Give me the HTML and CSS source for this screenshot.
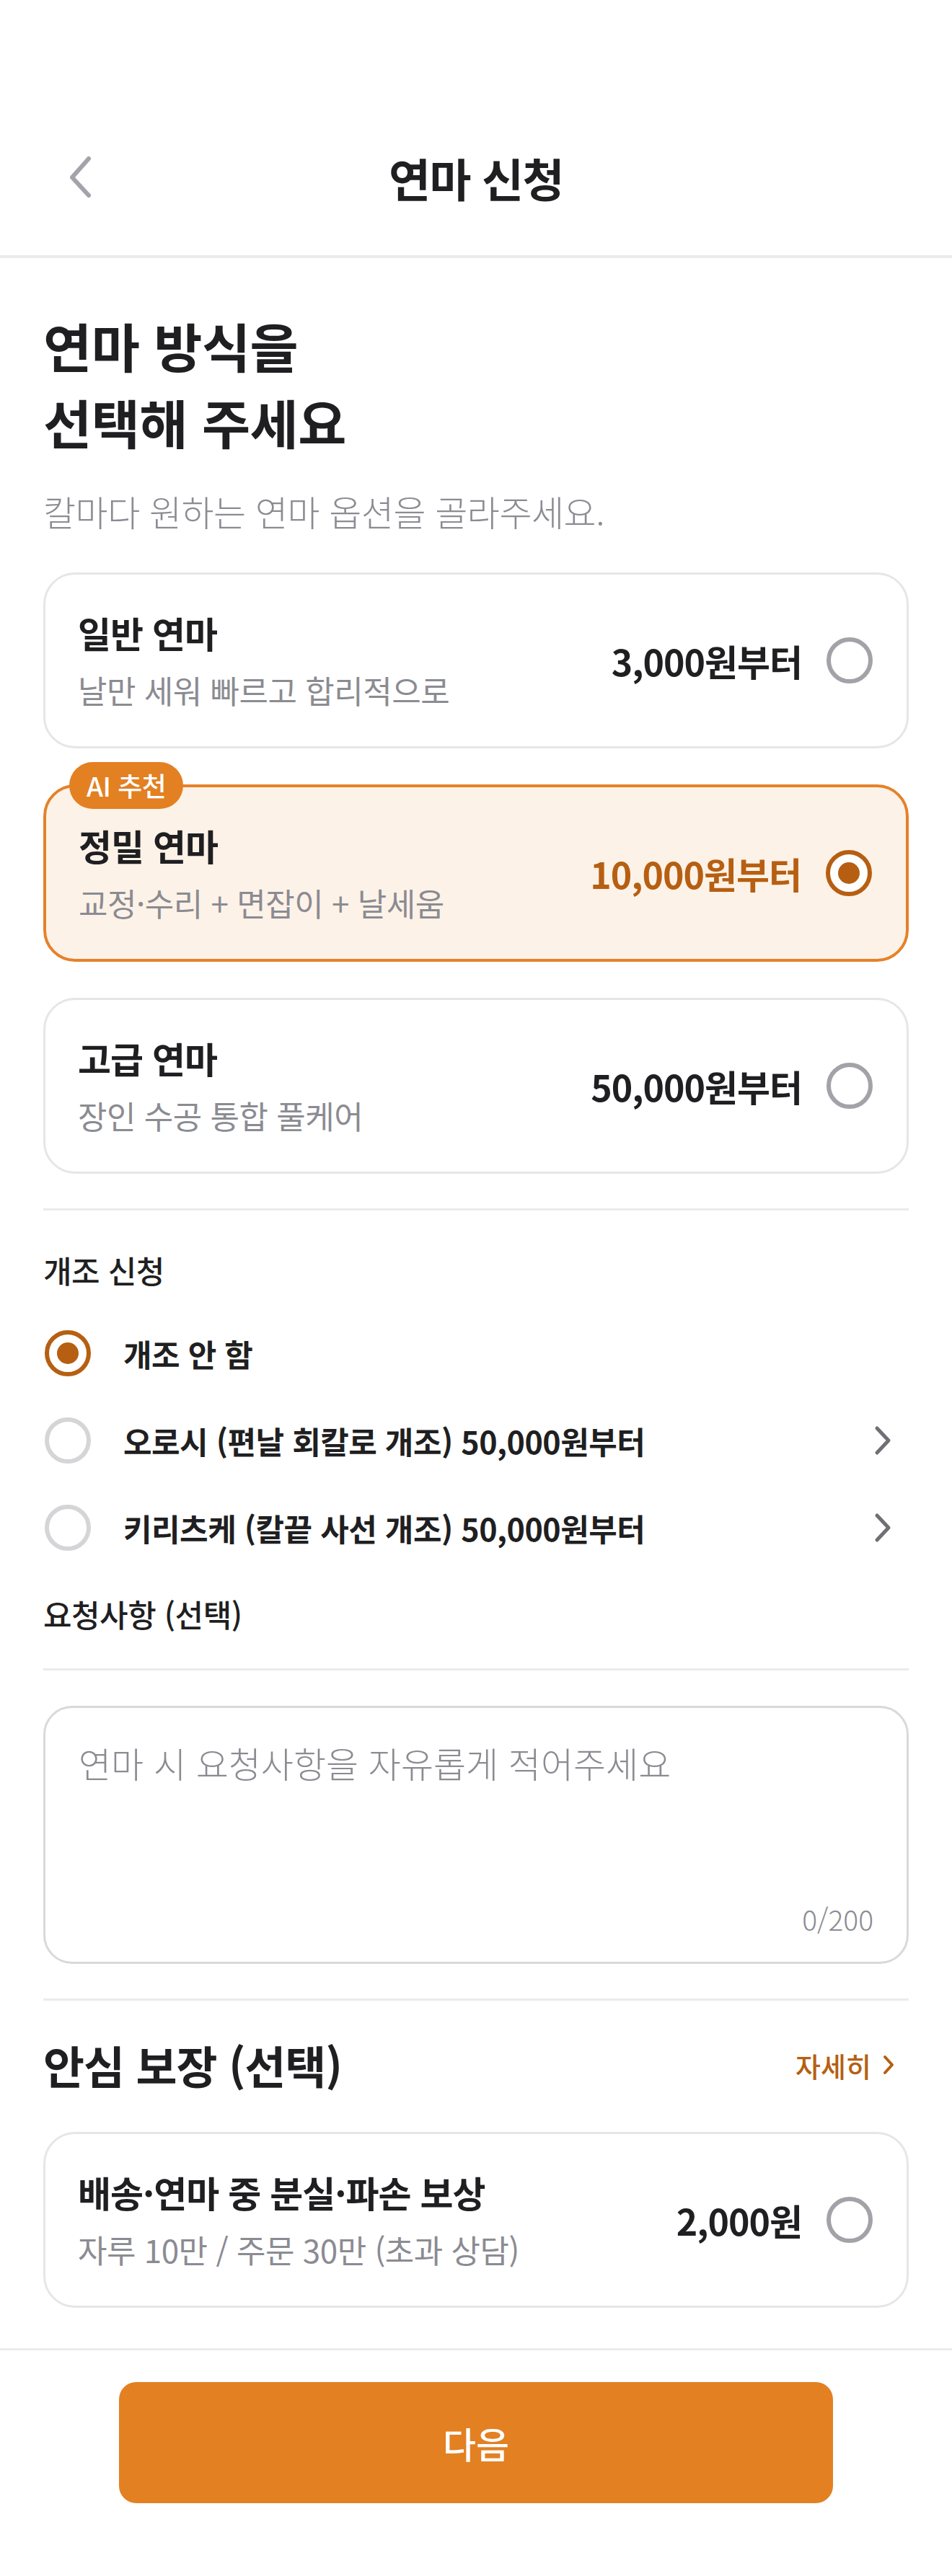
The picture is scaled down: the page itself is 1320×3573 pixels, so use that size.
FILE: index.html
```html
<!DOCTYPE html>
<html lang="ko">
<head>
    <meta charset="UTF-8">
    <meta name="viewport" content="width=device-width, initial-scale=1.0">
    <title>연마 신청</title>
    <link rel="stylesheet" href="styles.css">
</head>
<body>
    <header class="topbar">
        <div class="status-space"></div>
        <div class="nav">
            <button class="back" aria-label="뒤로">
                <svg width="36" height="60" viewBox="0 0 36 60">
                    <polyline points="29,5 6,31 29,56" fill="none" stroke="#a3a3aa" stroke-width="6" stroke-linecap="round" stroke-linejoin="round"/>
                </svg>
            </button>
            <div class="nav-title">연마 신청</div>
            <div></div>
        </div>
    </header>

    <main class="content">
        <h1 class="heading">연마 방식을<br>선택해 주세요</h1>
        <p class="lead">칼마다 원하는 연마 옵션을 골라주세요.</p>

        <div class="plans">
            <div class="plan">
                <div class="plan-text">
                    <div class="plan-title">일반 연마</div>
                    <div class="plan-desc">날만 세워 빠르고 합리적으로</div>
                </div>
                <div class="plan-right">
                    <span class="plan-price">3,000원부터</span>
                    <span class="radio"></span>
                </div>
            </div>

            <div class="plan selected">
                <span class="badge">AI 추천</span>
                <div class="plan-text">
                    <div class="plan-title">정밀 연마</div>
                    <div class="plan-desc">교정·수리 + 면잡이 + 날세움</div>
                </div>
                <div class="plan-right">
                    <span class="plan-price">10,000원부터</span>
                    <span class="radio on"></span>
                </div>
            </div>

            <div class="plan">
                <div class="plan-text">
                    <div class="plan-title">고급 연마</div>
                    <div class="plan-desc">장인 수공 통합 풀케어</div>
                </div>
                <div class="plan-right">
                    <span class="plan-price">50,000원부터</span>
                    <span class="radio"></span>
                </div>
            </div>
        </div>

        <hr class="divider">

        <div class="sect-label">개조 신청</div>
        <div class="mod-list">
            <div class="mod-row">
                <span class="radio on"></span>
                <span class="mod-text">개조 안 함</span>
            </div>
            <div class="mod-row">
                <span class="radio light"></span>
                <span class="mod-text">오로시 (편날 회칼로 개조) 50,000원부터</span>
                <svg class="mod-arrow" width="28" height="42" viewBox="0 0 28 42">
                    <polyline points="6,4 22,21 6,38" fill="none" stroke="#6f6f75" stroke-width="5" stroke-linecap="round" stroke-linejoin="round"/>
                </svg>
            </div>
            <div class="mod-row">
                <span class="radio light"></span>
                <span class="mod-text">키리츠케 (칼끝 사선 개조) 50,000원부터</span>
                <svg class="mod-arrow" width="28" height="42" viewBox="0 0 28 42">
                    <polyline points="6,4 22,21 6,38" fill="none" stroke="#6f6f75" stroke-width="5" stroke-linecap="round" stroke-linejoin="round"/>
                </svg>
            </div>
        </div>

        <div class="sect-label memo-label">요청사항 (선택)</div>
        <hr class="divider">

        <div class="memo">
            <textarea class="memo-input" placeholder="연마 시 요청사항을 자유롭게 적어주세요"></textarea>
            <div class="memo-count">0/200</div>
        </div>

        <hr class="divider">

        <div class="guard-head">
            <h2 class="guard-title">안심 보장 (선택)</h2>
            <a class="more" href="#">자세히
                <svg width="20" height="32" viewBox="0 0 20 32">
                    <polyline points="5,5 15,16 5,27" fill="none" stroke="#b65f12" stroke-width="4" stroke-linecap="round" stroke-linejoin="round"/>
                </svg>
            </a>
        </div>

        <div class="plan guard">
            <div class="plan-text">
                <div class="plan-title">배송·연마 중 분실·파손 보상</div>
                <div class="plan-desc">자루 10만 / 주문 30만 (초과 상담)</div>
            </div>
            <div class="plan-right">
                <span class="plan-price">2,000원</span>
                <span class="radio"></span>
            </div>
        </div>
    </main>

    <footer class="next-bar">
        <button class="next-btn">다음</button>
    </footer>
</body>
</html>
```

FILE: styles.css
```css
body
{
    margin: 0;
    background: #fff;
    color: #1f1f22;
    font-family: "Noto Sans CJK KR", "Noto Sans", sans-serif;
}
button
{
    font-family: inherit;
}

/* top bar */
.topbar
{
    border-bottom: 4px solid #ebebeb;
}
.status-space
{
    height: 136px;
}
.nav
{
    height: 218px;
    display: grid;
    grid-template-columns: 1fr auto 1fr;
    align-items: center;
}
.back
{
    justify-self: start;
    margin-left: 94px;
    padding: 0;
    border: none;
    background: none;
    display: flex;
}
.nav-title
{
    font-size: 63px;
    font-weight: 700;
    letter-spacing: -1.5px;
}

/* main */
.content
{
    padding: 67px 60px 56px;
}
.heading
{
    margin: 0;
    font-size: 73px;
    line-height: 106px;
    font-weight: 700;
    letter-spacing: -0.5px;
}
.lead
{
    margin: 42px 0 0;
    font-size: 49px;
    line-height: 60px;
    font-weight: 300;
    color: #8b8b92;
    letter-spacing: -0.5px;
}

.plans
{
    margin-top: 55px;
    display: flex;
    flex-direction: column;
    gap: 50px;
}
.plan
{
    position: relative;
    display: flex;
    align-items: center;
    justify-content: space-between;
    border: 3px solid #e6e6e6;
    border-radius: 44px;
    padding: 50px 47px 50px 45px;
    background: #fff;
}
.plan.selected
{
    border: 4px solid #e5822a;
    background: #fdf2e7;
}
.plan-title
{
    font-size: 50px;
    line-height: 60px;
    font-weight: 700;
    letter-spacing: -1px;
}
.plan-desc
{
    margin-top: 22px;
    font-size: 44px;
    line-height: 56px;
    color: #8b8b92;
    letter-spacing: -0.5px;
}
.plan-right
{
    display: flex;
    align-items: center;
    gap: 34px;
}
.plan-price
{
    font-size: 50px;
    font-weight: 700;
    letter-spacing: -1px;
}
.selected .plan-price
{
    color: #b65f12;
}
.badge
{
    position: absolute;
    left: 32px;
    top: -35px;
    height: 65px;
    padding: 0 24px;
    border-radius: 33px;
    background: #e38022;
    color: #fff;
    font-size: 37px;
    font-weight: 500;
    line-height: 65px;
    letter-spacing: -0.5px;
}

.radio
{
    width: 64px;
    height: 64px;
    box-sizing: border-box;
    border: 6px solid #a2a2a8;
    border-radius: 50%;
    display: flex;
    align-items: center;
    justify-content: center;
    flex-shrink: 0;
}
.radio.light
{
    border-color: #d5d5d8;
}
.radio.on
{
    border-color: #b65f12;
    background: #fff;
}
.radio.on::after
{
    content: "";
    width: 30px;
    height: 30px;
    border-radius: 50%;
    background: #b65f12;
}

.divider
{
    margin: 48px 0 0;
    border: none;
    height: 3px;
    background: #ebebeb;
}

.sect-label
{
    margin-top: 54px;
    font-size: 43px;
    line-height: 56px;
    font-weight: 500;
    letter-spacing: -0.5px;
}
.mod-list
{
    margin-top: 27px;
}
.mod-row
{
    height: 121px;
    display: flex;
    align-items: center;
    padding-left: 2px;
}
.mod-text
{
    margin-left: 45px;
    font-size: 43px;
    font-weight: 600;
    letter-spacing: -0.5px;
}
.mod-arrow
{
    margin-left: auto;
    margin-right: 22px;
}
.memo-label
{
    margin-top: 31px;
}

.memo
{
    margin-top: 49px;
    height: 358px;
    box-sizing: border-box;
    border: 3px solid #d9d9dc;
    border-radius: 40px;
    padding: 44px 46px 34px;
    display: flex;
    flex-direction: column;
}
.memo-input
{
    flex: 1;
    border: none;
    outline: none;
    resize: none;
    padding: 0;
    font-family: inherit;
    font-size: 49px;
    line-height: 64px;
    font-weight: 300;
    color: #1f1f22;
}
.memo-input::placeholder
{
    color: #8b8b92;
}
.memo-count
{
    text-align: right;
    font-size: 39px;
    line-height: 52px;
    font-weight: 300;
    color: #8b8b92;
}

.guard-head
{
    margin-top: 48px;
    display: flex;
    align-items: center;
    justify-content: space-between;
}
.guard-title
{
    margin: 0;
    font-size: 62px;
    line-height: 82px;
    font-weight: 700;
    letter-spacing: -1px;
}
.more
{
    display: flex;
    align-items: center;
    gap: 14px;
    margin-right: 18px;
    color: #b65f12;
    font-size: 38px;
    font-weight: 500;
    text-decoration: none;
}
.guard
{
    margin-top: 52px;
}

/* bottom */
.next-bar
{
    border-top: 3px solid #ebebeb;
    padding: 44px 165px 102px;
}
.next-btn
{
    display: block;
    width: 100%;
    height: 168px;
    border: none;
    border-radius: 24px;
    background: #e38022;
    color: #fff;
    font-size: 50px;
    font-weight: 500;
}
```
